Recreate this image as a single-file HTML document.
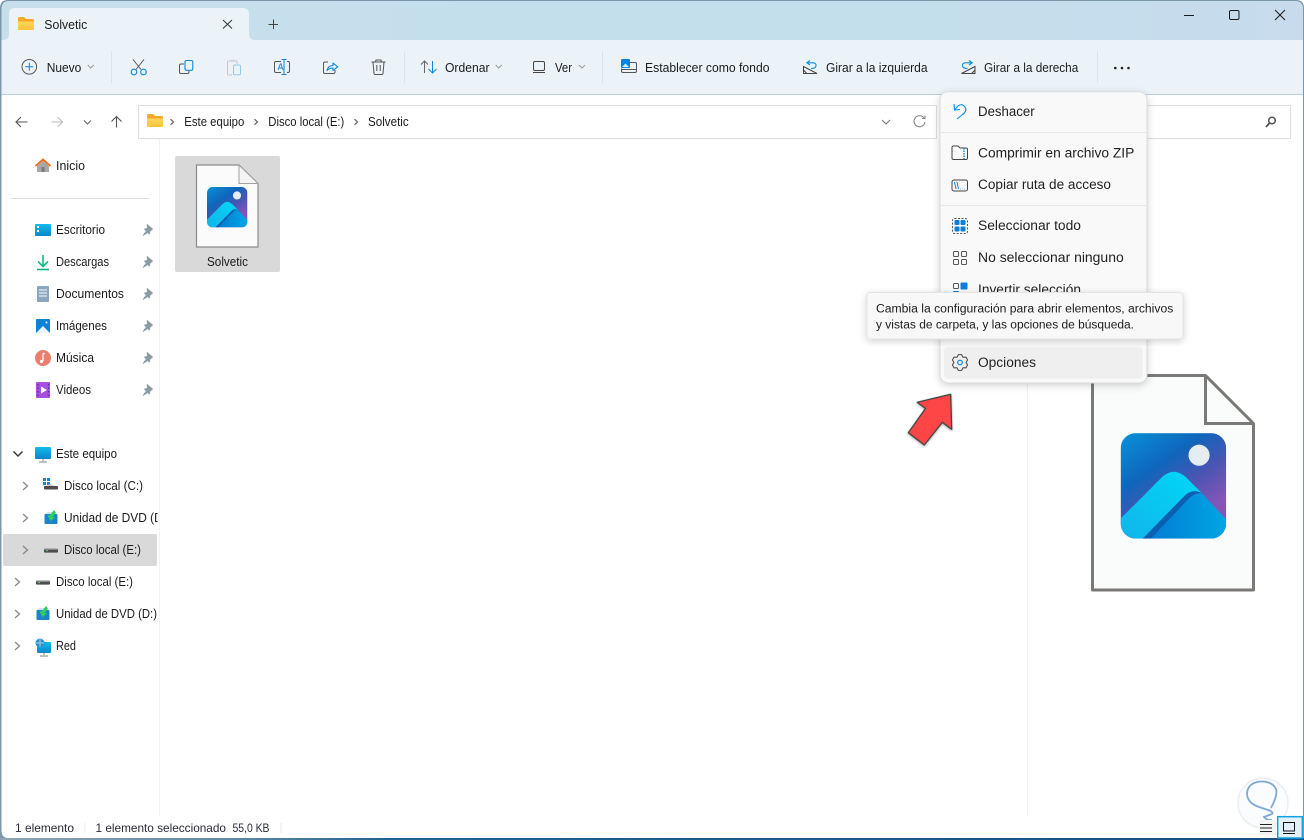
<!DOCTYPE html>
<html><head><meta charset="utf-8"><title>Solvetic</title>
<style>
html,body{margin:0;padding:0;background:#fff;width:1304px;height:840px;overflow:hidden}
svg{display:block}
text{font-family:"Liberation Sans",sans-serif;fill:#1c1c1c;font-size:12.5px}
.m{font-size:13.5px;fill:#222}
.s{font-size:12px;fill:#2a2a3a}
</style></head><body>
<svg xmlns="http://www.w3.org/2000/svg" width="1304" height="840" viewBox="0 0 1304 840">
<defs>
<linearGradient id="top" x1="0" x2="1" y1="0" y2="0"><stop offset="0" stop-color="#c6dfeb"/><stop offset=".7" stop-color="#c3dfec"/><stop offset="1" stop-color="#c7dbec"/></linearGradient>
<linearGradient id="btm" x1="0" x2="1" y1="0" y2="0"><stop offset="0" stop-color="#8fa5b3"/><stop offset=".18" stop-color="#5f8aa5"/><stop offset=".3" stop-color="#1f6390"/><stop offset="1" stop-color="#164f85"/></linearGradient>
<linearGradient id="ap" x1=".15" y1="0" x2=".85" y2="1"><stop offset="0" stop-color="#0a8ad4"/><stop offset=".3" stop-color="#0f66bb"/><stop offset=".55" stop-color="#4a55b3"/><stop offset=".8" stop-color="#8455b6"/></linearGradient>
<linearGradient id="m1" x1="0" y1="1" x2="1" y2="0"><stop offset="0" stop-color="#12b4ea"/><stop offset="1" stop-color="#00d8f8"/></linearGradient>
<linearGradient id="m2" x1="0" y1="0" x2="1" y2="0"><stop offset="0" stop-color="#0478d2"/><stop offset="1" stop-color="#00a6e4"/></linearGradient>
<linearGradient id="fo" x1="0" y1="0" x2="0" y2="1"><stop offset="0" stop-color="#ffd75e"/><stop offset="1" stop-color="#fcc23a"/></linearGradient>
<linearGradient id="mo" x1="0" y1="0" x2="0" y2="1"><stop offset="0" stop-color="#12bde8"/><stop offset="1" stop-color="#0a85cc"/></linearGradient>
<filter id="sh" x="-10%" y="-10%" width="120%" height="125%"><feDropShadow dx="0" dy="2" stdDeviation="4" flood-color="#000" flood-opacity=".18"/></filter>
<filter id="sh2" x="-20%" y="-20%" width="140%" height="140%"><feDropShadow dx="0" dy="1" stdDeviation="1.200" flood-color="#000" flood-opacity=".35"/></filter>
<g id="pin"><path transform="scale(1.300)" d="M-1 -4.500 L3 -1 L1.200 .2 L.6 2.600 L-3 -1 L-.7 -1.700Z M-1.800 .8 L-4 3.600 L-.9 1.600Z" fill="#8e9aa3" stroke="#8e9aa3" stroke-width=".8" stroke-linejoin="round"/></g>
<g id="folder"><path d="M0 1.500 Q0 0 1.500 0 H6 L8 2 H14.500 Q16 2 16 3.500 V11.500 Q16 13 14.500 13 H1.500 Q0 13 0 11.500Z" fill="#f9a825"/><path d="M0 4.500 H16 V11.500 Q16 13 14.500 13 H1.500 Q0 13 0 11.500Z" fill="url(#fo)"/></g>
<g id="chev"><path d="M-2 -4 L2.500 0 L-2 4" fill="none" stroke="#8a8a8a" stroke-width="1.400"/></g>
<g id="bc"><path d="M-1.500 -2.800 L1.500 0 L-1.500 2.800" fill="none" stroke="#6a6a6a" stroke-width="1.300"/></g>
<g id="dchev"><path d="M-3 -1.500 L0 1.500 L3 -1.500" fill="none" stroke="#9a9a9a" stroke-width="1"/></g>
<g id="drive"><rect x="0" y="0" width="14" height="3.600" rx="1" fill="#4d4d4d"/><rect x="0" y="-.8" width="14" height="1.400" rx=".7" fill="#a8a8a8"/><rect x="2" y="1.200" width="2" height="1" fill="#5fd35f"/></g>
<g id="dvd"><rect x="0" y="2" width="13" height="10" rx="1" fill="#1d84c8"/><path d="M0 2 L3 0 H10 L13 2Z" fill="#cfe4f2"/><path d="M9.500 -2 L5 3.500 H3 L6 9 L10.500 5 H8 L11.500 .5Z" fill="#2fd15a"/></g>
</defs>

<!-- desktop/back -->
<rect width="1304" height="840" fill="#fff"/>
<path d="M0 8 Q0 0 8 0 H1296 Q1304 0 1304 8 V838 H0Z" fill="#7b98ab"/>
<rect x="0" y="838" width="1304" height="2" fill="url(#btm)"/>
<path d="M1.500 9 Q1.500 1 9 1 H1295 Q1303 1 1303 9 V40 H1.500Z" fill="url(#top)"/>
<rect x="1.500" y="40" width="1301.500" height="54" fill="#ecf3f8"/>
<rect x="1.500" y="94" width="1301.500" height="1" fill="#b7cfdf"/>
<path d="M1.500 95 H1303 V832 Q1303 838 1297 838 H8 Q1.500 838 1.500 830Z" fill="#fff"/>

<!-- tab -->
<path d="M0 40 H3 Q9 40 9 34 V14 Q9 8 15 8 H243 Q249 8 249 14 V34 Q249 40 255 40 H0Z" fill="#ebf3f8"/>
<use href="#folder" x="18" y="17"/>
<text x="44.300" y="29" textLength="43" lengthAdjust="spacingAndGlyphs">Solvetic</text>
<path d="M223 20 L232 28.500 M232 20 L223 28.500" stroke="#333" stroke-width="1"/>
<path d="M273.500 19.500 V29 M268.500 24.500 H278" stroke="#444" stroke-width="1"/>
<path d="M1184 15.500 H1194" stroke="#1a1a1a" stroke-width="1"/>
<rect x="1229.500" y="10.500" width="9.500" height="9" rx="1.500" fill="none" stroke="#1a1a1a" stroke-width="1"/>
<path d="M1275 10 L1285 20 M1285 10 L1275 20" stroke="#1a1a1a" stroke-width="1"/>

<!-- toolbar -->
<circle cx="29.300" cy="66.800" r="7.300" fill="none" stroke="#555" stroke-width="1"/>
<path d="M29.300 62.800 V70.800 M25.300 66.800 H33.300" stroke="#0c86dc" stroke-width="1"/>
<text x="46.700" y="72" textLength="34.600" lengthAdjust="spacingAndGlyphs">Nuevo</text>
<use href="#dchev" x="90.700" y="66.500"/>
<g stroke="#dde4e9"><path d="M111.500 51 V83 M404.500 51 V83 M602.500 51 V83 M1097.500 51 V83"/></g>

<!-- scissors -->
<path d="M133 59.500 L141 69.500 M144 59.500 L136 69.500" stroke="#555" stroke-width="1" fill="none"/>
<circle cx="134" cy="72" r="2.800" fill="none" stroke="#0c86dc" stroke-width="1.100"/><circle cx="143.500" cy="72" r="2.800" fill="none" stroke="#0c86dc" stroke-width="1.100"/>
<!-- copy -->
<path d="M184 64 H181 Q179.500 64 179.500 65.500 V72 Q179.500 73.500 181 73.500 H187.500 Q189 73.500 189 72 V71" fill="none" stroke="#555" stroke-width="1"/>
<rect x="185" y="60.500" width="7.800" height="9.800" rx="1.500" fill="none" stroke="#0c86dc" stroke-width="1.100"/>
<!-- paste -->
<path d="M232 61 H228.500 Q227.500 61 227.500 62 V74 Q227.500 75 228.500 75 H232 M236 61 H237 V64" fill="none" stroke="#c4c8cc" stroke-width="1"/>
<rect x="230" y="59.500" width="6" height="2.500" rx="1" fill="#d4d8db"/>
<rect x="233.500" y="65" width="7" height="9.800" rx="1.200" fill="none" stroke="#8fcbef" stroke-width="1"/>
<!-- rename -->
<path d="M281 61.500 H276 Q274.500 61.500 274.500 63 V71 Q274.500 72.500 276 72.500 H281 M287 61.500 H288 Q289.500 61.500 289.500 63 V71 Q289.500 72.500 288 72.500 H287" fill="none" stroke="#555" stroke-width="1"/>
<path d="M281.500 59.500 H286.500 M284 59.500 V74.500 M281.500 74.500 H286.500" stroke="#0c86dc" stroke-width="1" fill="none"/>
<path d="M278 70 L280.300 63.800 H281 L283 70 M278.800 68 H282.500" stroke="#0c86dc" stroke-width=".9" fill="none"/>
<!-- share -->
<path d="M328 62 H325 Q323.500 62 323.500 63.500 V72 Q323.500 73.500 325 73.500 H333.500 Q335 73.500 335 72 V70" fill="none" stroke="#555" stroke-width="1"/>
<path d="M327 70.500 Q328 65.500 333 65.500 V63 L337.700 66.800 L333 70.500 V68 Q329.500 68 327 70.500Z" fill="none" stroke="#0c86dc" stroke-width="1.100" stroke-linejoin="round"/>
<!-- delete -->
<path d="M371.500 62 H385.500 M375.500 62 L376 60 H381 L381.500 62 M373 62 L374 73.500 Q374.100 74.500 375 74.500 H382 Q382.900 74.500 383 73.500 L384 62 M376.800 65 V71 M380.200 65 V71" fill="none" stroke="#555" stroke-width="1"/>
<!-- sort -->
<path d="M424.500 73 V61 M421 64.500 L424.500 61 L428 64.500" fill="none" stroke="#666" stroke-width="1"/>
<path d="M432.500 61 V73 M428.500 69 L432.500 73 L436.500 69" fill="none" stroke="#0c86dc" stroke-width="1"/>
<text x="445" y="72" textLength="44.500" lengthAdjust="spacingAndGlyphs">Ordenar</text>
<use href="#dchev" x="498.700" y="66.500"/>
<rect x="533.500" y="61.500" width="11" height="9" rx="1.500" fill="none" stroke="#444" stroke-width="1"/>
<path d="M533 72.500 H545" stroke="#444" stroke-width="1"/>
<text x="555" y="72" textLength="17" lengthAdjust="spacingAndGlyphs">Ver</text>
<use href="#dchev" x="582" y="66.500"/>
<!-- background -->
<path d="M630 62.500 H635 Q636.500 62.500 636.500 64 V71 Q636.500 72.500 635 72.500 H623 Q621.500 72.500 621.500 71 V68.500" fill="none" stroke="#555" stroke-width="1"/>
<path d="M621.500 69.500 H636.500" stroke="#555" stroke-width="1"/>
<rect x="621" y="59" width="9" height="9" rx="1" fill="#0c82dc"/><path d="M622 67 L625.500 63.500 L629 67Z" fill="#d6ecfb"/>
<text x="645" y="72" textLength="124.500" lengthAdjust="spacingAndGlyphs">Establecer como fondo</text>
<!-- rotate left -->
<path d="M803.500 73.500 H817 L803.500 66.500Z M803.500 70 L806.800 73.500" fill="none" stroke="#444" stroke-width="1"/>
<path d="M810 60.500 L806.800 62.800 L810 65 M807 62.800 H813.500 Q816.500 63.300 816 66 Q815.500 68.500 811 68.500" fill="none" stroke="#0c90e4" stroke-width="1.100"/>
<text x="826" y="72" textLength="101.500" lengthAdjust="spacingAndGlyphs">Girar a la izquierda</text>
<!-- rotate right -->
<path d="M975 73.500 H961.500 L975 66.500Z M975 70 L971.700 73.500" fill="none" stroke="#444" stroke-width="1"/>
<path d="M969 60.500 L972.200 62.800 L969 65 M972 62.800 H965 Q962 63.300 962.500 66 Q963 68.500 967.500 68.500" fill="none" stroke="#0c90e4" stroke-width="1.100"/>
<text x="984" y="72" textLength="94.300" lengthAdjust="spacingAndGlyphs">Girar a la derecha</text>
<g fill="#222"><circle cx="1115.300" cy="68" r="1.300"/><circle cx="1122" cy="68" r="1.300"/><circle cx="1128.500" cy="68" r="1.300"/></g>

<!-- nav -->
<path d="M27.500 122 H16 M21 117 L16 122 L21 127" fill="none" stroke="#555" stroke-width="1.100"/>
<path d="M51.500 122 H62.500 M57.500 117 L62.500 122 L57.500 127" fill="none" stroke="#bbb" stroke-width="1.100"/>
<path d="M84 120.500 L87.500 124 L91 120.500" fill="none" stroke="#666" stroke-width="1.100"/>
<path d="M116.500 127.500 V116.500 M111.500 121.500 L116.500 116.500 L121.500 121.500" fill="none" stroke="#555" stroke-width="1.100"/>

<!-- address -->
<rect x="138.500" y="105.500" width="798" height="33" fill="#fff" stroke="#dcdfe1"/>
<use href="#folder" x="147" y="114"/>
<use href="#bc" x="172" y="122"/>
<text x="184.300" y="126" textLength="60" lengthAdjust="spacingAndGlyphs">Este equipo</text>
<use href="#bc" x="256" y="122"/>
<text x="268.300" y="126" textLength="76" lengthAdjust="spacingAndGlyphs">Disco local (E:)</text>
<use href="#bc" x="356" y="122"/>
<text x="368" y="126" textLength="40.700" lengthAdjust="spacingAndGlyphs">Solvetic</text>
<path d="M882 120 L886 124 L890 120" fill="none" stroke="#777" stroke-width="1"/>
<path d="M924 118 A5.500 5.500 0 1 0 925 122 M925 115.500 V118.500 H922" fill="none" stroke="#8a8a8a" stroke-width="1.100"/>
<rect x="1140.500" y="105.500" width="150" height="33" fill="#fff" stroke="#dcdfe1"/>
<circle cx="1272" cy="120.500" r="3.300" fill="none" stroke="#555" stroke-width="1.500"/><path d="M1269.500 123 L1266 127" stroke="#555" stroke-width="1.800"/>

<!-- sidebar -->
<path d="M159.500 139 V816" stroke="#f2f2f2"/>
<path d="M11 198.500 H149" stroke="#dcdcdc"/>
<!-- home -->
<path d="M37 172 V166 L43 160.500 L49 166 V172Z" fill="#a8a8a8"/><rect x="41.500" y="167" width="3" height="5" fill="#7a7a7a"/>
<path d="M35.500 166 L43 159.500 L50.500 166" fill="none" stroke="#f76a15" stroke-width="1.800"/>
<text x="56" y="170" textLength="29" lengthAdjust="spacingAndGlyphs">Inicio</text>
<!-- desktop -->
<rect x="35" y="224" width="16" height="12" rx="1" fill="url(#mo)"/><rect x="37" y="226" width="2" height="2" fill="#fff"/><rect x="37" y="230" width="2" height="2" fill="#fff"/>
<text x="56" y="234" textLength="49" lengthAdjust="spacingAndGlyphs">Escritorio</text>
<!-- downloads -->
<path d="M43 255 V266 M38 261.500 L43 266.500 L48 261.500" fill="none" stroke="#12b886" stroke-width="1.600"/><path d="M37 269.500 H49" stroke="#0fb08a" stroke-width="1.600"/>
<text x="56" y="266" textLength="53" lengthAdjust="spacingAndGlyphs">Descargas</text>
<!-- docs -->
<rect x="37" y="286" width="12" height="16" rx="1" fill="#8aa6c1"/><path d="M39 290 H47 M39 293 H47 M39 296 H47" stroke="#fff" stroke-width="1"/>
<text x="56" y="298" textLength="68" lengthAdjust="spacingAndGlyphs">Documentos</text>
<!-- images -->
<rect x="36" y="319" width="14" height="14" rx="1" fill="#0a82d6"/><path d="M36 333 L43 326 L50 333Z" fill="#eaf4fb"/><circle cx="46.500" cy="322.500" r="1" fill="#fff"/>
<text x="56" y="330" textLength="51" lengthAdjust="spacingAndGlyphs">Imágenes</text>
<!-- music -->
<circle cx="43" cy="358" r="8" fill="#ec7e70"/><path d="M43 353 V361 M43 353 L45 354" stroke="#fff" stroke-width="1.200" fill="none"/><circle cx="41.500" cy="361.500" r="1.600" fill="#fff"/>
<text x="56" y="362" textLength="38" lengthAdjust="spacingAndGlyphs">Música</text>
<!-- video -->
<rect x="36" y="382" width="14" height="16" rx="1" fill="#a84fe0"/><path d="M41 386.500 L47 390 L41 393.500Z" fill="#fff"/><path d="M38 384 V396 M48.500 384 V396" stroke="#5a2a90" stroke-dasharray="1.500 2" stroke-width="1.200"/>
<text x="56" y="394" textLength="35" lengthAdjust="spacingAndGlyphs">Videos</text>
<use href="#pin" x="148.500" y="230.500"/><use href="#pin" x="148.500" y="262.500"/><use href="#pin" x="148.500" y="294.500"/><use href="#pin" x="148.500" y="326.500"/><use href="#pin" x="148.500" y="358.500"/><use href="#pin" x="148.500" y="390.500"/>

<rect x="3" y="534" width="154" height="32" rx="2" fill="#d9d9d9"/>
<path d="M13.500 451.500 L18 456 L22.500 451.500" fill="none" stroke="#333" stroke-width="1.400"/>
<rect x="35" y="447" width="16" height="12" rx="1" fill="url(#mo)"/><path d="M43 459 V461 M39 462 H47" stroke="#9a9a9a" stroke-width="1.200"/>
<text x="56" y="458" textLength="61" lengthAdjust="spacingAndGlyphs">Este equipo</text>
<use href="#chev" x="25" y="486"/><use href="#chev" x="25" y="518"/><use href="#chev" x="25" y="550"/><use href="#chev" x="17" y="582"/><use href="#chev" x="17" y="614"/><use href="#chev" x="17" y="646"/>
<g fill="#1483da"><rect x="43" y="478" width="3" height="3"/><rect x="47" y="478" width="3" height="3"/><rect x="43" y="482" width="3" height="3"/><rect x="47" y="482" width="3" height="3"/></g>
<path d="M50 484 L57 487 H44Z" fill="#c8c8c8"/><rect x="44" y="486" width="14" height="3.500" rx="1" fill="#4d4d4d"/>
<text x="64" y="490" textLength="79" lengthAdjust="spacingAndGlyphs">Disco local (C:)</text>
<use href="#dvd" x="44.500" y="512"/>
<svg x="0" y="500" width="157.500" height="34"><text x="64" y="22" textLength="106" lengthAdjust="spacingAndGlyphs">Unidad de DVD (D:)</text></svg>
<use href="#drive" x="44" y="549"/>
<text x="64" y="554" textLength="77" lengthAdjust="spacingAndGlyphs">Disco local (E:)</text>
<use href="#drive" x="36" y="581"/>
<text x="56" y="586" textLength="77" lengthAdjust="spacingAndGlyphs">Disco local (E:)</text>
<use href="#dvd" x="36.500" y="608"/>
<text x="56" y="618" textLength="101" lengthAdjust="spacingAndGlyphs">Unidad de DVD (D:)</text>
<rect x="37" y="642" width="14" height="11" rx="1" fill="url(#mo)"/><path d="M44 653 V655 M40 656 H48" stroke="#9a9a9a" stroke-width="1.200"/><circle cx="40" cy="643" r="4.500" fill="#2c8fd0"/><path d="M36 643 H44 M40 639 V647" stroke="#cfe8f6" stroke-width=".7"/>
<text x="56" y="650" textLength="20" lengthAdjust="spacingAndGlyphs">Red</text>

<!-- tile -->
<rect x="175" y="156" width="105" height="116" rx="2" fill="#d9d9d9"/>
<path d="M196.500 165 H239 L258 183.500 V247 H196.500Z" fill="#fbfbfb" stroke="#8a8a8a" stroke-width="1.200"/>
<path d="M239 165 V183.500 H258Z" fill="#f4f4f4" stroke="#a0a0a0" stroke-width="1"/>
<svg x="207" y="187" width="40.400" height="40.400" viewBox="0 0 105 105"><use href="#appicon"/></svg>
<text x="207" y="266" textLength="41" lengthAdjust="spacingAndGlyphs">Solvetic</text>

<!-- details pane -->
<path d="M1027.500 139 V816" stroke="#efefef"/>
<path d="M1092.500 375.500 H1205.500 L1253.500 423.500 V590 H1092.500Z" fill="#fafbfb" stroke="#7b7977" stroke-width="3" stroke-linejoin="round"/>
<path d="M1205.500 375.500 V423.500 H1253.500" fill="none" stroke="#7b7977" stroke-width="3"/>
<svg x="1120.700" y="433" width="105.500" height="105.700" viewBox="0 0 105 105">
<g id="appicon">
<defs><clipPath id="rr"><rect width="105" height="105" rx="15"/></clipPath></defs>
<g clip-path="url(#rr)">
<rect width="105" height="105" fill="url(#ap)"/>
<path d="M22 105 L64 62 Q72 55 81 60 L105 86 V105Z" fill="url(#m2)"/>
<path d="M0 105 V85 L41 44 Q52.700 33 65 44 L81 60 Q72 55 64 62 L22 105Z" fill="url(#m1)"/>
<path d="M22 105 L64 62 Q72 55 81 60 Q74 59 68 65 L30 105Z" fill="#0a5fb0"/>
<circle cx="78" cy="22" r="10.500" fill="#e6edf2"/>
</g>
</g>
</svg>

<!-- red arrow -->
<path d="M950.700 394.300 L917.300 402.300 L925.500 408.500 L908.300 432.700 L924.300 445 L942.300 422.300 L951.700 429.300Z" fill="#ff4545" stroke="#444" stroke-width="1.300" stroke-linejoin="round" filter="url(#sh2)"/>

<!-- menu -->
<rect x="940" y="91.700" width="207" height="291.300" rx="8" fill="#f9f9f9" stroke="#dcdcdc" filter="url(#sh)"/>
<path d="M941 132.500 H1146 M941 205.500 H1146" stroke="#e6e6e6"/>
<rect x="944" y="346.700" width="198.700" height="32" rx="4" fill="#efefef"/>
<path d="M954 104 L954.500 110 L960 109.500 M954.500 110 L958 106 Q962 103 965 107 Q967.500 111 962 115 L957 119" fill="none" stroke="#0c90e4" stroke-width="1.100"/>
<text class="m" x="978" y="116" textLength="56.700" lengthAdjust="spacingAndGlyphs">Deshacer</text>
<path d="M952 147.500 Q952 146 953.500 146 H958 L960 148 H966 Q967.500 148 967.500 149.500 V158 Q967.500 159.500 966 159.500 H953.500 Q952 159.500 952 158Z" fill="none" stroke="#444" stroke-width="1"/>
<path d="M964 148 V159" stroke="#0c86dc" stroke-width="1.400" stroke-dasharray="1.500 1"/>
<text class="m" x="978" y="157.300" textLength="156.300" lengthAdjust="spacingAndGlyphs">Comprimir en archivo ZIP</text>
<rect x="952" y="180" width="15.500" height="11" rx="2" fill="none" stroke="#444" stroke-width="1"/>
<path d="M954.500 182 L956 189 M957 182 L958.500 189 M960.500 189 H961 M962.500 189 H963 M964.500 189 H965" stroke="#0c86dc" stroke-width="1"/>
<text class="m" x="978" y="189" textLength="133" lengthAdjust="spacingAndGlyphs">Copiar ruta de acceso</text>
<rect x="952.500" y="218.500" width="15" height="15" rx="2" fill="none" stroke="#555" stroke-dasharray="2 1.500"/>
<g fill="#0c7ede"><rect x="954.500" y="220" width="5" height="5" rx="1"/><rect x="960.500" y="220" width="5" height="5" rx="1"/><rect x="954.500" y="226.500" width="5" height="5" rx="1"/><rect x="960.500" y="226.500" width="5" height="5" rx="1"/></g>
<text class="m" x="978" y="230" textLength="103" lengthAdjust="spacingAndGlyphs">Seleccionar todo</text>
<g fill="none" stroke="#555"><rect x="953.500" y="251.500" width="5" height="5" rx="1"/><rect x="961.500" y="251.500" width="5" height="5" rx="1"/><rect x="953.500" y="259.500" width="5" height="5" rx="1"/><rect x="961.500" y="259.500" width="5" height="5" rx="1"/></g>
<text class="m" x="978" y="262" textLength="145.700" lengthAdjust="spacingAndGlyphs">No seleccionar ninguno</text>
<rect x="953.500" y="283.500" width="5" height="5" rx="1" fill="none" stroke="#555"/><rect x="960.500" y="282.500" width="7" height="7" rx="1" fill="#0c7ede"/><rect x="953" y="291" width="6" height="5" rx="1" fill="#0c7ede"/>
<text class="m" x="978" y="294" textLength="103" lengthAdjust="spacingAndGlyphs">Invertir selección</text>
<g transform="translate(960 362.500)">
<path d="M1.660 -7.830 L-1.660 -7.830 L-3 -5.200 L-5.950 -5.350 L-7.610 -2.470 L-6 0 L-7.610 2.470 L-5.950 5.350 L-3 5.200 L-1.660 7.830 L1.660 7.830 L3 5.200 L5.950 5.350 L7.610 2.470 L6 0 L7.610 -2.470 L5.950 -5.350 L3 -5.200Z" fill="none" stroke="#444" stroke-width="1" stroke-linejoin="round"/>
<circle r="2.300" fill="none" stroke="#0c86dc" stroke-width="1.200"/>
</g>
<text class="m" x="978" y="367" textLength="58" lengthAdjust="spacingAndGlyphs">Opciones</text>

<!-- tooltip -->
<rect x="867" y="292.500" width="316" height="46.500" rx="3" fill="#f8f8f8" stroke="#e4e4e4" filter="url(#sh)"/>
<text x="876" y="312.300" style="font-size:11.500px" textLength="297.300" lengthAdjust="spacingAndGlyphs">Cambia la configuración para abrir elementos, archivos</text>
<text x="876" y="328.700" style="font-size:11.500px" textLength="258" lengthAdjust="spacingAndGlyphs">y vistas de carpeta, y las opciones de búsqueda.</text>

<!-- status -->
<text class="s" x="15" y="832" textLength="59" lengthAdjust="spacingAndGlyphs">1 elemento</text>
<path d="M85 823 V833 M281 823 V833" stroke="#e8e8e8"/>
<text class="s" x="95.500" y="832" textLength="130.500" lengthAdjust="spacingAndGlyphs">1 elemento seleccionado</text>
<text class="s" x="232.500" y="832" textLength="37" lengthAdjust="spacingAndGlyphs">55,0 KB</text>

<!-- watermark -->
<circle cx="1263" cy="803" r="25" fill="#fbfcfd" stroke="#e8eef3" stroke-width="1.500"/>
<path d="M1271 808 Q1278 795 1276 789 Q1272 781 1260 781.500 Q1248 783 1247 793 Q1247 803 1259 807 L1268 810 Q1274 812 1272 814 L1264 817 Q1266 820 1272 820" fill="none" stroke="#7eaad2" stroke-width="1.800"/>
<!-- view buttons -->
<rect x="1259" y="820" width="17" height="15" fill="#f3f3f3"/>
<path d="M1260 824.500 H1272 M1260 828 H1272 M1260 831.500 H1272" stroke="#222"/>
<rect x="1277.700" y="816.700" width="24.600" height="21.300" fill="#e2f0f9" stroke="#12a3e3" stroke-width="1.500"/>
<rect x="1283.500" y="822.500" width="11" height="8.500" fill="none" stroke="#111"/>
<path d="M1283 833.500 H1295" stroke="#111"/>
</svg>
</body></html>
